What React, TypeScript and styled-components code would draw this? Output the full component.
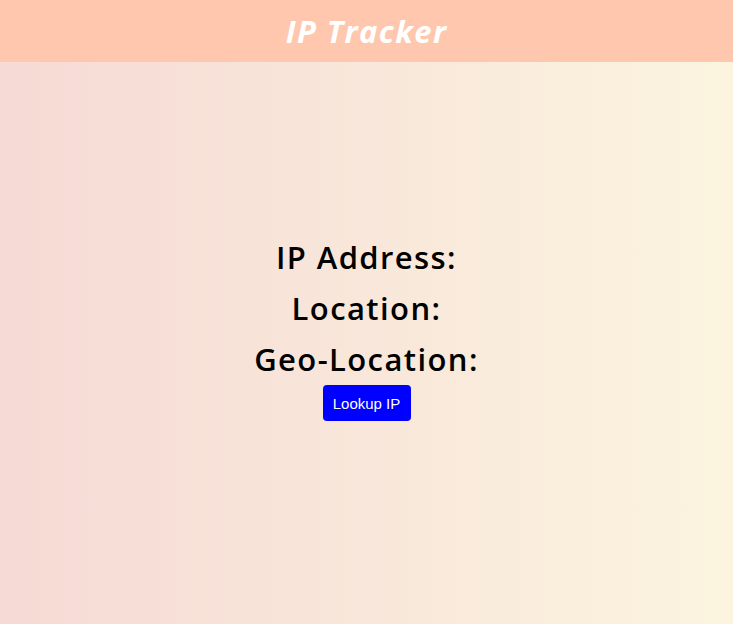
import React from 'react';
import styled, { createGlobalStyle } from 'styled-components';

const GlobalStyle = createGlobalStyle`
  html, body {
    margin: 0;
    padding: 0;
  }
  body {
    font-family: "Open Sans", "Liberation Sans", sans-serif;
  }
`;

const Page = styled.div`
  min-height: 624px;
  display: flex;
  flex-flow: column nowrap;
  background: linear-gradient(to right, #f6dad5, #fbf4df);
`;

const Header = styled.header`
  background-color: #ffc8ae;
  height: 62px;

  display: flex;
  align-items: center;
  justify-content: center;
`;

const Title = styled.h1`
  margin: 0;
  color: #ffffff;
  font-family: "Open Sans", sans-serif;
  font-style: italic;
  font-weight: 700;
  font-size: 31px;
  letter-spacing: 1.4px;
`;

const Main = styled.main`
  flex-grow: 1;
  padding-top: 170px;

  display: flex;
  flex-flow: column nowrap;
  align-items: center;
`;

const Field = styled.h2`
  margin: 0;
  height: 51px;
  line-height: 51px;
  color: #000;
  font-family: "Open Sans", sans-serif;
  font-weight: 600;
  font-size: 31px;
  letter-spacing: 1.4px;
`;

const LookupButton = styled.button`
  background-color: #0000ff;
  color: #ffffff;
  border: none;
  border-radius: 4px;
  width: 88px;
  height: 36px;
  padding: 0;
  font-family: "Liberation Sans", Arial, sans-serif;
  font-size: 15px;
  cursor: pointer;
`;

export default function App() {
  return (
    <>
      <GlobalStyle />
      <Page>
        <Header>
          <Title>IP Tracker</Title>
        </Header>
        <Main>
          <Field>IP Address:</Field>
          <Field>Location:</Field>
          <Field>Geo-Location:</Field>
          <LookupButton>Lookup IP</LookupButton>
        </Main>
      </Page>
    </>
  );
}
